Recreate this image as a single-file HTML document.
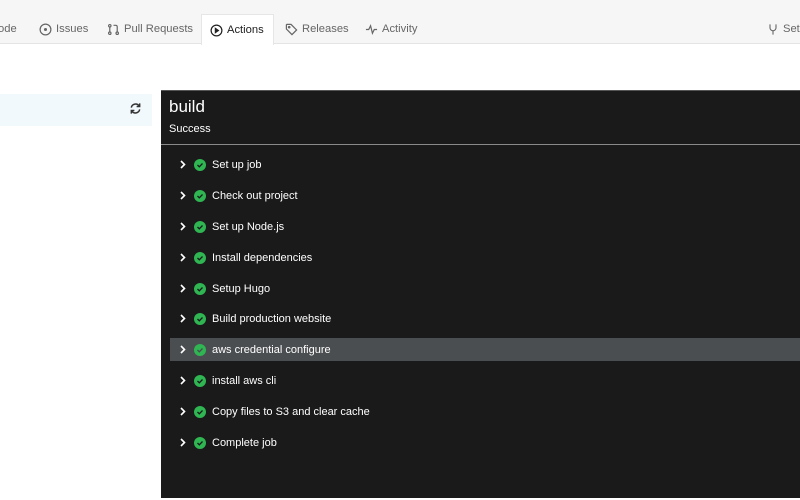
<!DOCTYPE html>
<html><head><meta charset="utf-8"><style>
*{margin:0;padding:0;box-sizing:border-box}
body{width:800px;height:500px;overflow:hidden;background:#fff;font-family:"Liberation Sans",sans-serif;position:relative}
.top{position:absolute;left:0;top:0;width:800px;height:44px;background:#f6f6f6;border-bottom:1px solid #e4e4e4}
.tab{position:absolute;top:14px;height:30px;font-size:11.2px;color:#666;display:flex;align-items:center;gap:4px}
.tab svg{stroke:#666;fill:none;stroke-width:1.3}
.act{background:#fff;border:1px solid #e6e6e6;border-bottom:none;color:#222;padding:0 8px;height:31px}
.act svg{stroke:#222}
.side{position:absolute;left:0;top:94px;width:152px;height:32px;background:#f2f9fd}
.panel{position:absolute;left:161px;top:90px;width:639px;height:408px;background:#1a1a1a;border-top:1px solid #555}
.h{position:absolute;left:8px;top:6px;color:#fff;font-size:17px}
.s{position:absolute;left:8px;top:32px;color:#fff;font-size:11px}
.sep{position:absolute;left:0;top:53px;width:639px;height:1px;background:#8a8a8a}
.row{position:absolute;left:9px;width:630px;height:23px;color:#fff;font-size:11px;display:flex;align-items:center}
.row.hl{background:#4b4e51}
.chev{width:24px;padding-left:10px;display:flex}
.ok{width:12px;height:12px;border-radius:50%;background:#2fb552;margin-right:6px;display:flex;align-items:center;justify-content:center}
</style></head><body>
<div class="top">
<div class="tab" style="left:-2px">ode</div>
<div class="tab" style="left:39px"><svg width="13" height="13" viewBox="0 0 14 14"><circle cx="7" cy="7" r="5.8"/><circle cx="7" cy="7" r="1" fill="#666"/></svg>Issues</div>
<div class="tab" style="left:107px"><svg width="13" height="13" viewBox="0 0 14 14"><circle cx="3" cy="3" r="1.3"/><circle cx="3" cy="11" r="1.3"/><circle cx="11" cy="11" r="1.3"/><path d="M3 4.5v5M11 9.5V4a1.5 1.5 0 0 0-1.5-1.5H7"/></svg>Pull Requests</div>
<div class="tab act" style="left:201px;width:73px"><svg width="13" height="13" viewBox="0 0 14 14"><circle cx="7" cy="7" r="5.8"/><path d="M5.8 4.8v4.4L9 7z" fill="#222"/></svg>Actions</div>
<div class="tab" style="left:285px"><svg width="13" height="13" viewBox="0 0 14 14"><path d="M1.5 2v4.5l6 6 5-5-6-6H2z"/><circle cx="4.5" cy="4.5" r=".8"/></svg>Releases</div>
<div class="tab" style="left:365px"><svg width="13" height="13" viewBox="0 0 14 14"><path d="M1 7h3l2-4 2 8 2-4h3"/></svg>Activity</div>
<div class="tab" style="left:767px"><svg width="12" height="13" viewBox="0 0 14 14"><path d="M3.5 1v4a3.5 3.5 0 0 0 7 0V1M7 8.5v4.5"/></svg>Set</div>
</div>
<div class="side"></div>
<svg style="position:absolute;left:129px;top:102px" width="13" height="13" viewBox="0 0 14 14" fill="none" stroke="#333" stroke-width="1.6"><path d="M2.5 6A4.6 4.6 0 0 1 11 4.5M11.5 8A4.6 4.6 0 0 1 3 9.5"/><path d="M11.5 1.5v3.3H8.2M2.5 12.5V9.2h3.3"/></svg>
<div class="panel">
<div class="h">build</div><div class="s">Success</div><div class="sep"></div>
<div class="row" style="top:62px"><span class="chev"><svg width="6" height="9" viewBox="0 0 6 9"><path d="M1 1l3.5 3.5L1 8" stroke="#fff" stroke-width="1.6" fill="none"/></svg></span><span class="ok"><svg width="8" height="8" viewBox="0 0 8 8"><path d="M1.5 4l1.8 1.8L6.5 2.5" stroke="#1a1a1a" stroke-width="1.3" fill="none"/></svg></span>Set up job</div>
<div class="row" style="top:93px"><span class="chev"><svg width="6" height="9" viewBox="0 0 6 9"><path d="M1 1l3.5 3.5L1 8" stroke="#fff" stroke-width="1.6" fill="none"/></svg></span><span class="ok"><svg width="8" height="8" viewBox="0 0 8 8"><path d="M1.5 4l1.8 1.8L6.5 2.5" stroke="#1a1a1a" stroke-width="1.3" fill="none"/></svg></span>Check out project</div>
<div class="row" style="top:124px"><span class="chev"><svg width="6" height="9" viewBox="0 0 6 9"><path d="M1 1l3.5 3.5L1 8" stroke="#fff" stroke-width="1.6" fill="none"/></svg></span><span class="ok"><svg width="8" height="8" viewBox="0 0 8 8"><path d="M1.5 4l1.8 1.8L6.5 2.5" stroke="#1a1a1a" stroke-width="1.3" fill="none"/></svg></span>Set up Node.js</div>
<div class="row" style="top:155px"><span class="chev"><svg width="6" height="9" viewBox="0 0 6 9"><path d="M1 1l3.5 3.5L1 8" stroke="#fff" stroke-width="1.6" fill="none"/></svg></span><span class="ok"><svg width="8" height="8" viewBox="0 0 8 8"><path d="M1.5 4l1.8 1.8L6.5 2.5" stroke="#1a1a1a" stroke-width="1.3" fill="none"/></svg></span>Install dependencies</div>
<div class="row" style="top:186px"><span class="chev"><svg width="6" height="9" viewBox="0 0 6 9"><path d="M1 1l3.5 3.5L1 8" stroke="#fff" stroke-width="1.6" fill="none"/></svg></span><span class="ok"><svg width="8" height="8" viewBox="0 0 8 8"><path d="M1.5 4l1.8 1.8L6.5 2.5" stroke="#1a1a1a" stroke-width="1.3" fill="none"/></svg></span>Setup Hugo</div>
<div class="row" style="top:216px"><span class="chev"><svg width="6" height="9" viewBox="0 0 6 9"><path d="M1 1l3.5 3.5L1 8" stroke="#fff" stroke-width="1.6" fill="none"/></svg></span><span class="ok"><svg width="8" height="8" viewBox="0 0 8 8"><path d="M1.5 4l1.8 1.8L6.5 2.5" stroke="#1a1a1a" stroke-width="1.3" fill="none"/></svg></span>Build production website</div>
<div class="row hl" style="top:247px"><span class="chev"><svg width="6" height="9" viewBox="0 0 6 9"><path d="M1 1l3.5 3.5L1 8" stroke="#fff" stroke-width="1.6" fill="none"/></svg></span><span class="ok"><svg width="8" height="8" viewBox="0 0 8 8"><path d="M1.5 4l1.8 1.8L6.5 2.5" stroke="#4b4e51" stroke-width="1.3" fill="none"/></svg></span>aws credential configure</div>
<div class="row" style="top:278px"><span class="chev"><svg width="6" height="9" viewBox="0 0 6 9"><path d="M1 1l3.5 3.5L1 8" stroke="#fff" stroke-width="1.6" fill="none"/></svg></span><span class="ok"><svg width="8" height="8" viewBox="0 0 8 8"><path d="M1.5 4l1.8 1.8L6.5 2.5" stroke="#1a1a1a" stroke-width="1.3" fill="none"/></svg></span>install aws cli</div>
<div class="row" style="top:309px"><span class="chev"><svg width="6" height="9" viewBox="0 0 6 9"><path d="M1 1l3.5 3.5L1 8" stroke="#fff" stroke-width="1.6" fill="none"/></svg></span><span class="ok"><svg width="8" height="8" viewBox="0 0 8 8"><path d="M1.5 4l1.8 1.8L6.5 2.5" stroke="#1a1a1a" stroke-width="1.3" fill="none"/></svg></span>Copy files to S3 and clear cache</div>
<div class="row" style="top:340px"><span class="chev"><svg width="6" height="9" viewBox="0 0 6 9"><path d="M1 1l3.5 3.5L1 8" stroke="#fff" stroke-width="1.6" fill="none"/></svg></span><span class="ok"><svg width="8" height="8" viewBox="0 0 8 8"><path d="M1.5 4l1.8 1.8L6.5 2.5" stroke="#1a1a1a" stroke-width="1.3" fill="none"/></svg></span>Complete job</div>
</div>
</body></html>
